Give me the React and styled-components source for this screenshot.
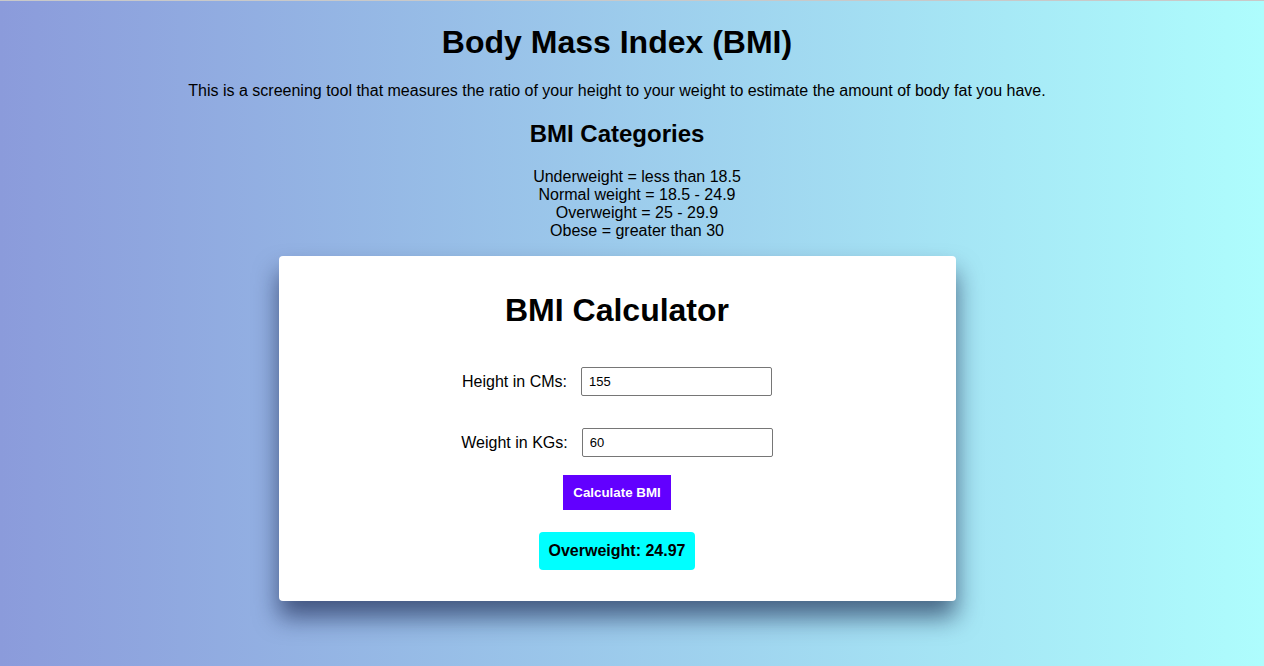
import React, { useState } from 'react';
import styled, { createGlobalStyle } from 'styled-components';

const GlobalStyle = createGlobalStyle`
	html, body {
		margin: 0;
		padding: 0;
	}
	body {
		font-family: "Liberation Sans", Arial, sans-serif;
		color: #000;
	}
`;

const Page = styled.div`
	min-height: 666px;
	box-sizing: border-box;
	border-top: 1px solid #c9c9c9;
	padding-right: 30px;
	background: linear-gradient(to right, #8b9bdb, #aefdfd);
	display: flex;
	flex-direction: column;
	align-items: center;
	text-align: center;
`;

const Title = styled.h1`
	font-size: 32px;
	margin: 23px 0 0;
`;

const Intro = styled.p`
	font-size: 16px;
	margin: 21px 0 0;
`;

const SubTitle = styled.h2`
	font-size: 24px;
	margin: 20px 0 0;
`;

const CategoryList = styled.ul`
	margin: 20px 0 0;
	padding: 0 0 0 40px;
	list-style: none;
	font-size: 16px;
	line-height: 18px;
`;

const Card = styled.div`
	margin-top: 16px;
	width: 677px;
	box-sizing: border-box;
	background: #fff;
	border-radius: 4px;
	padding: 36px 0 31px;
	box-shadow: 0 16px 24px rgba(10, 20, 60, 0.6);
	display: flex;
	flex-direction: column;
	align-items: center;
`;

const CardTitle = styled.h1`
	font-size: 32px;
	margin: 0;
`;

const Field = styled.label`
	display: flex;
	align-items: center;
	gap: 14px;
	font-size: 16px;
	margin-top: ${(p) => p.$top}px;
`;

const Input = styled.input`
	width: 191px;
	height: 29px;
	box-sizing: border-box;
	border: 1px solid #767676;
	border-radius: 2px;
	padding: 0 7px;
	font-family: "Liberation Sans", Arial, sans-serif;
	font-size: 13px;
	outline: none;
`;

const Button = styled.button`
	margin-top: 18px;
	width: 108px;
	height: 35px;
	border: none;
	background: #6200ff;
	color: #fff;
	font-family: "Liberation Sans", Arial, sans-serif;
	font-weight: bold;
	font-size: 13.33px;
	cursor: pointer;
`;

const Result = styled.div`
	margin-top: 22px;
	height: 38px;
	padding: 0 10px;
	border-radius: 4px;
	background: #00ffff;
	font-weight: bold;
	font-size: 16px;
	display: flex;
	align-items: center;
	justify-content: center;
	white-space: nowrap;
`;

function category(bmi) {
	if (bmi < 18.5) return 'Underweight';
	if (bmi < 24) return 'Normal weight';
	if (bmi < 30) return 'Overweight';
	return 'Obese';
}

export default function App() {
	const [height, setHeight] = useState('155');
	const [weight, setWeight] = useState('60');
	const [bmi, setBmi] = useState(24.97);

	const calc = () => {
		const h = parseFloat(height) / 100;
		const w = parseFloat(weight);
		if (h > 0 && w > 0) setBmi(Math.round((w / (h * h)) * 100) / 100);
	};

	return (
		<Page>
			<GlobalStyle />
			<Title>Body Mass Index (BMI)</Title>
			<Intro>
				This is a screening tool that measures the ratio of your height to your weight to estimate the amount of body fat you have.
			</Intro>
			<SubTitle>BMI Categories</SubTitle>
			<CategoryList>
				<li>Underweight = less than 18.5</li>
				<li>Normal weight = 18.5 - 24.9</li>
				<li>Overweight = 25 - 29.9</li>
				<li>Obese = greater than 30</li>
			</CategoryList>
			<Card>
				<CardTitle>BMI Calculator</CardTitle>
				<Field $top={38}>
					Height in CMs:
					<Input value={height} onChange={(e) => setHeight(e.target.value)} />
				</Field>
				<Field $top={32}>
					Weight in KGs:
					<Input value={weight} onChange={(e) => setWeight(e.target.value)} />
				</Field>
				<Button onClick={calc}>Calculate BMI</Button>
				<Result>
					{category(bmi)}: {bmi}
				</Result>
			</Card>
		</Page>
	);
}
